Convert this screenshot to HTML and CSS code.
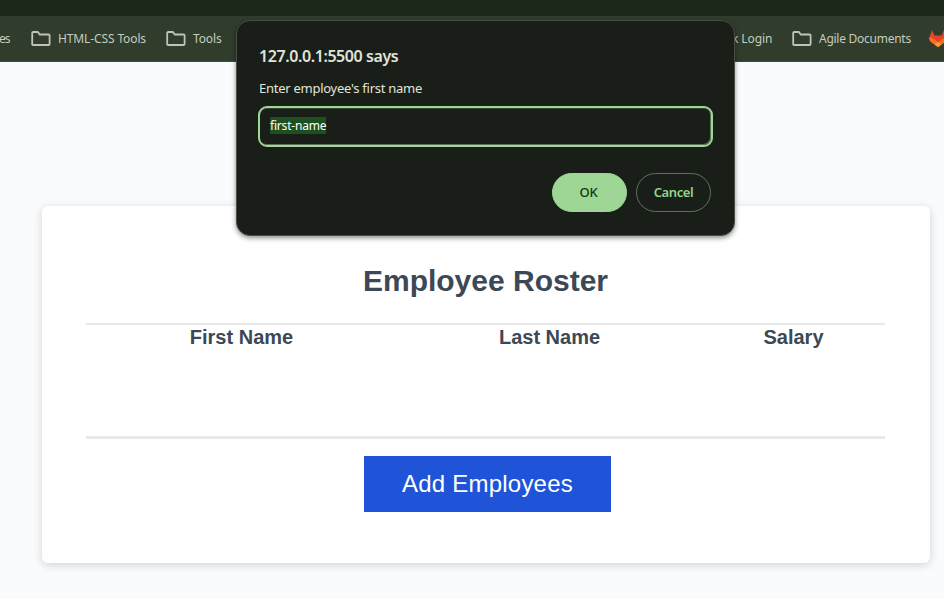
FILE: index.html
```html
<!DOCTYPE html>
<html lang="en">
<head>
<meta charset="utf-8">
<title>Employee Roster</title>
<link rel="stylesheet" href="styles.css">
</head>
<body>
<header class="browser">
  <div class="toolbar"></div>
  <nav class="bookmarks">
    <span class="bookmark first">es</span>
    <span class="bookmark wide"><svg class="folder" viewBox="0 0 20 16"><path d="M1.2 14V2q0-1 1-1h4.6l2 2.500h8.800q1 0 1 1V13q0 1-1 1h-15.400q-1 0-1-1z"/></svg><span class="t-html">HTML-CSS Tools</span></span>
    <span class="bookmark"><svg class="folder" viewBox="0 0 20 16"><path d="M1.2 14V2q0-1 1-1h4.6l2 2.500h8.800q1 0 1 1V13q0 1-1 1h-15.400q-1 0-1-1z"/></svg><span class="t-html">Tools</span></span>
    <span class="bookmark login">k Login</span>
    <span class="bookmark agile"><svg class="folder" viewBox="0 0 20 16"><path d="M1.2 14V2q0-1 1-1h4.6l2 2.500h8.800q1 0 1 1V13q0 1-1 1h-15.400q-1 0-1-1z"/></svg><span class="t-agile">Agile Documents</span></span>
    <svg class="fox" viewBox="0 0 18 17"><path fill="#e24329" d="M3 0 5.500 5.500h7L15 0l2.500 7q.8 3-1.500 5l-7 5-7-5Q-.3 10 .5 7z"/><path fill="#fc6d26" d="M.5 7Q3.500 7.500 9 12.200 14.500 7.500 17.500 7q.8 3-1.500 5l-7 5-7-5Q-.3 10 .5 7z"/><path fill="#fca326" d="m9 12 3.500 2.500L9 17l-3.500-2.500z"/></svg>
  </nav>
</header>
<main class="page">
  <section class="card">
    <h1>Employee Roster</h1>
    <div class="roster">
      <span>First Name</span><span>Last Name</span><span>Salary</span>
    </div>
    <button class="add">Add Employees</button>
  </section>
</main>
<div class="dialog" role="dialog">
  <h2><span>127.0.0.1:5500 says</span></h2>
  <label for="value"><span>Enter employee's first name</span></label>
  <div class="field" id="value"><span>first-name</span></div>
  <div class="actions"><button class="ok">OK</button><button class="cancel">Cancel</button></div>
</div>
</body>
</html>
```
FILE: styles.css
```css
* { box-sizing: border-box; }
body { margin: 0; height: 599px; overflow: hidden; background: #fafbfd; font-family: "Liberation Sans", Arial, sans-serif; }
.toolbar { height: 16px; background: #1c291a; }
.bookmarks { display: flex; align-items: center; height: 46px; background: #303d2d; border-bottom: 1px solid #464744; overflow: hidden; color: #c5cbbd; font: 12px/16px "Noto Sans", sans-serif; }
.bookmark { display: flex; align-items: center; flex: none; white-space: nowrap; }
.first { width: 32px; margin-left: -1px; letter-spacing: -0.9px; }
.wide { width: 135px; }
.login { margin-left: auto; width: 60px; letter-spacing: -0.1px; }
.agile { width: 137px; }
.t-html { letter-spacing: -0.12px; }
.t-agile { letter-spacing: -0.26px; }
.folder { width: 20px; height: 16px; margin-right: 7px; fill: none; stroke: #c0c3b5; stroke-width: 1.8; flex: none; }
.fox { width: 18px; height: 17px; flex: none; margin-right: -3px; }
.page { padding: 144px 14px 0 42px; }
.card { display: flex; flex-direction: column; align-items: center; height: 357px; padding: 56px 45px 0 44px; background: #fff; border-radius: 6px; box-shadow: 0 2px 10px rgba(0,0,0,.16); color: #3c4856; }
h1 { margin: 0; font-size: 30px; line-height: 38px; height: 61px; }
.roster { display: grid; grid-template-columns: 311px 305px 183px; width: 799px; height: 116px; border-top: 2px solid #e8e8e8; border-bottom: 3px solid #e8e9ea; text-align: center; font-size: 20px; font-weight: bold; line-height: 25px; }
.add { width: 247px; height: 56px; margin: 17px 0 0 4px; padding: 0; border: 0; background: #2054d8; color: #fff; font: 24px "Liberation Sans", sans-serif; letter-spacing: 0.22px; }
.dialog { position: absolute; left: 236px; top: 20px; width: 499px; height: 216px; padding: 23px 22px; background: #1a1e19; border: 1px solid #484d46; border-radius: 14px; box-shadow: 0 2px 5px rgba(0,0,0,.45); color: #e1e4da; font-family: "Noto Sans", sans-serif; }
h2 { margin: 0; font-size: 16px; font-weight: 600; line-height: 24px; letter-spacing: -0.42px; }
label { display: block; margin-top: 10px; font-size: 13px; line-height: 20px; letter-spacing: -0.26px; }
.field { display: flex; align-items: center; width: 455px; height: 41px; margin: 8px 0 0 -1px; padding: 0 0 2px 10px; border: 2px solid #9ed696; border-radius: 9px; box-shadow: inset -1px -1px 0 #626d5f, inset 0 1px 0 #394637; font-size: 12px; line-height: 17px; letter-spacing: -0.2px; color: #fff; }
.field span { background: #1e501f; }
.actions { display: flex; justify-content: flex-end; gap: 9px; margin: 26px 1px 0 0; }
.actions button { width: 75px; height: 39px; padding: 0 0 2px; border: 1px solid #61705d; border-radius: 20px; background: transparent; color: #8ed588; font: 600 13px "Noto Sans", sans-serif; letter-spacing: -0.4px; }
.actions .ok { padding-right: 2px; border-color: #9ed696; background: #9ed696; color: #0c3b13; font-weight: 500; letter-spacing: -0.15px; }
```
